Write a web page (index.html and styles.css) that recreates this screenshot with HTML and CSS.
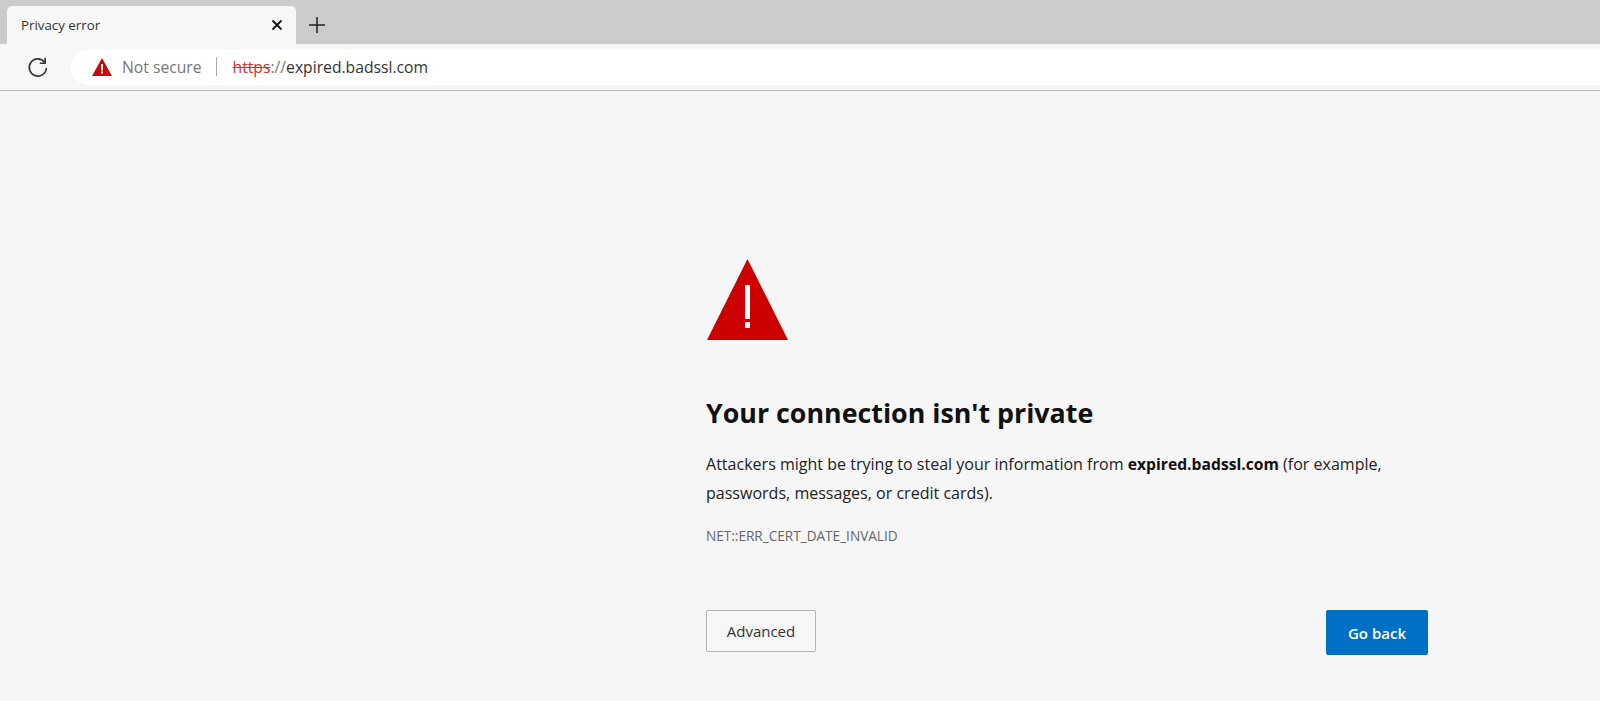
FILE: index.html
```html
<!DOCTYPE html>
<html lang="en">
<head>
    <meta charset="utf-8">
    <title>Privacy error</title>
    <link rel="stylesheet" href="styles.css">
</head>
<body>
<div class="tabstrip">
    <div class="tab">
        <span class="tab-title">Privacy error</span>
        <svg class="tab-close" width="12" height="12" viewBox="0 0 12 12"><path d="M1.5 1.5l9 9M10.5 1.5l-9 9"/></svg>
    </div>
    <svg class="new-tab" width="18" height="18" viewBox="0 0 18 18"><path d="M9 1v16M1 9h16"/></svg>
</div>

<div class="toolbar">
    <svg class="reload" width="22" height="22" viewBox="0 0 22 22"><path d="M17.6 6.2A8.6 8.6 0 1 0 19.4 12"/><path d="M18.2 1.8v5.4h-5.4"/></svg>
    <div class="omnibox">
        <svg class="warn-small" width="20" height="18" viewBox="0 0 20 18"><path d="M10 0L20 18H0z"/><rect class="mark" x="9" y="6" width="2" height="6.5"/><rect class="mark" x="9" y="13.5" width="2" height="2"/></svg>
        <span class="not-secure">Not secure</span>
        <span class="divider"></span>
        <span class="url"><span class="scheme">https</span><span class="slashes">://</span>expired.badssl.com</span>
    </div>
</div>

<div class="page">
    <div class="content">
        <svg class="warn-big" width="81" height="81" viewBox="0 0 81 81"><path d="M40.5 0L81 81H0z"/><rect class="mark" x="38" y="26" width="5" height="34"/><rect class="mark" x="38" y="63" width="5" height="6"/></svg>
        <h1>Your connection isn't private</h1>
        <p class="message">Attackers might be trying to steal your information from <strong>expired.badssl.com</strong> (for example, passwords, messages, or credit cards).</p>
        <div class="error-code">NET::ERR_CERT_DATE_INVALID</div>
        <div class="buttons">
            <button class="btn-advanced">Advanced</button>
            <button class="btn-back">Go back</button>
        </div>
    </div>
</div>
</body>
</html>
```

FILE: styles.css
```css
html, body {
    margin: 0;
    height: 100%;
    overflow: hidden;
}

body {
    display: flex;
    flex-direction: column;
    background-color: #f6f6f6;
    color: #1a1a1a;
    font-family: "Open Sans", "Noto Sans", sans-serif;
}

.tabstrip {
    height: 44px;
    flex: none;
    display: flex;
    align-items: flex-end;
    padding-left: 7px;
    background-color: #cbcbcb;
    box-sizing: border-box;
}

.tab {
    width: 289px;
    height: 38px;
    box-sizing: border-box;
    padding: 0 13px 0 14px;
    display: flex;
    align-items: center;
    justify-content: space-between;
    background-color: #f7f7f7;
    border-radius: 5px 5px 0 0;
}

.tab-title {
    font-size: 13.3px;
    color: #333;
}

.tab-close path {
    fill: none;
    stroke: #111;
    stroke-width: 1.8;
}

.new-tab {
    margin: 0 0 10px 12px;
}

.new-tab path {
    fill: none;
    stroke: #222;
    stroke-width: 1.5;
}

.toolbar {
    height: 47px;
    flex: none;
    display: flex;
    align-items: center;
    box-sizing: border-box;
    padding: 0 0 1px 27px;
    background-color: #f7f7f7;
    border-bottom: 1px solid #bbb;
}

.reload {
    flex: none;
}

.reload path {
    fill: none;
    stroke: #333;
    stroke-width: 1.6;
}

.omnibox {
    flex: 1;
    height: 36px;
    margin-left: 22px;
    padding-left: 21px;
    display: flex;
    align-items: center;
    background-color: #fff;
    border-radius: 18px 0 0 18px;
    font-size: 15.7px;
}

.warn-small path {
    fill: #c80a0a;
}

.mark {
    fill: #fff;
}

.not-secure {
    margin-left: 10px;
    color: #777;
}

.divider {
    width: 1px;
    height: 19px;
    margin: 0 16px 0 14px;
    background-color: #aaa;
}

.url {
    color: #333;
}

.scheme {
    color: #c33;
    text-decoration: line-through;
}

.slashes {
    color: #777;
}

.page {
    flex: 1;
    min-height: 0;
    display: flex;
    justify-content: flex-start;
    padding-left: 706px;
    background-color: #f6f6f6;
}

.content {
    width: 722px;
    padding-top: 168px;
}

.warn-big {
    display: block;
    margin-left: 0.5px;
}

.warn-big path {
    fill: #cc0000;
}

h1 {
    margin: 55px 0 0;
    font-size: 26.8px;
    line-height: 36px;
    font-weight: 700;
    color: #111;
}

.message {
    margin: 19px 0 0;
    width: 690px;
    font-size: 16.05px;
    line-height: 29px;
    color: #222;
}

.message strong {
    font-size: 15.7px;
    color: #111;
}

.error-code {
    margin-top: 19px;
    font-size: 13.6px;
    line-height: 17px;
    color: #666;
}

.buttons {
    margin-top: 66px;
    display: flex;
    justify-content: space-between;
    align-items: flex-start;
}

button {
    font-family: inherit;
    font-size: 15px;
    border-radius: 2px;
    padding: 0;
}

.btn-advanced {
    width: 110px;
    height: 42px;
    background-color: #f7f7f7;
    border: 1px solid #b5b5b5;
    color: #333;
}

.btn-back {
    width: 102px;
    height: 45px;
    background-color: #0070c4;
    border: none;
    color: #fff;
    font-weight: 600;
}
```
